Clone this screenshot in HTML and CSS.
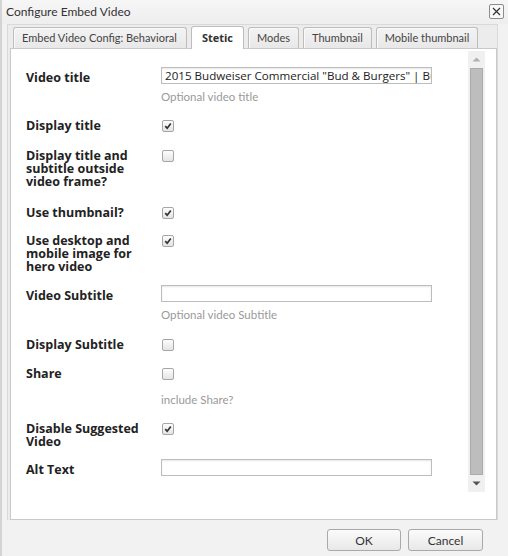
FILE: index.html
```html
<!DOCTYPE html>
<html>
<head>
<meta charset="utf-8">
<link rel="stylesheet" href="styles.css">
</head>
<body>
<div class="dialog">
  <div class="titlebar">
    <span class="title">Configure Embed Video</span>
    <span class="close"><svg width="13" height="13" viewBox="0 0 13 13"><path d="M3 3 L10 10 M10 3 L3 10" stroke="#333" stroke-width="1.2" fill="none"/></svg></span>
  </div>
  <div class="tabpanel">
    <div class="tabstrip">
      <div class="tab tab-wide">Embed Video Config: Behavioral</div>
      <div class="tab active">Stetic</div>
      <div class="tab">Modes</div>
      <div class="tab">Thumbnail</div>
      <div class="tab">Mobile thumbnail</div>
    </div>
    <div class="body">
      <div class="scrollarea">
        <div class="form">
          <div class="row">
            <div class="label label-input">Video title</div>
            <div class="field">
              <div class="input">2015 Budweiser Commercial "Bud &amp; Burgers" | Budweiser</div>
              <div class="help">Optional video title</div>
            </div>
          </div>
          <div class="row sp-16">
            <div class="label">Display title</div>
            <div class="field"><span class="cb checked"><svg width="10" height="10" viewBox="0 0 10 10"><path d="M2.2 5.2 L4.2 7.2 L7.8 2.6" stroke="#333" stroke-width="1.7" fill="none"/></svg></span></div>
          </div>
          <div class="row sp-17">
            <div class="label">Display title and<br>subtitle outside<br>video frame?</div>
            <div class="field"><span class="cb"></span></div>
          </div>
          <div class="row sp-18">
            <div class="label">Use thumbnail?</div>
            <div class="field"><span class="cb checked"><svg width="10" height="10" viewBox="0 0 10 10"><path d="M2.2 5.2 L4.2 7.2 L7.8 2.6" stroke="#333" stroke-width="1.7" fill="none"/></svg></span></div>
          </div>
          <div class="row sp-15">
            <div class="label">Use desktop and<br>mobile image for<br>hero video</div>
            <div class="field"><span class="cb checked"><svg width="10" height="10" viewBox="0 0 10 10"><path d="M2.2 5.2 L4.2 7.2 L7.8 2.6" stroke="#333" stroke-width="1.7" fill="none"/></svg></span></div>
          </div>
          <div class="row sp-12">
            <div class="label label-input">Video Subtitle</div>
            <div class="field">
              <div class="input"></div>
              <div class="help">Optional video Subtitle</div>
            </div>
          </div>
          <div class="row sp-17">
            <div class="label">Display Subtitle</div>
            <div class="field"><span class="cb"></span></div>
          </div>
          <div class="row sp-16">
            <div class="label">Share</div>
            <div class="field">
              <span class="cb"></span>
              <div class="help help-cb">include Share?</div>
            </div>
          </div>
          <div class="row sp-16">
            <div class="label">Disable Suggested<br>Video</div>
            <div class="field"><span class="cb checked"><svg width="10" height="10" viewBox="0 0 10 10"><path d="M2.2 5.2 L4.2 7.2 L7.8 2.6" stroke="#333" stroke-width="1.7" fill="none"/></svg></span></div>
          </div>
          <div class="row sp-11">
            <div class="label label-input">Alt Text</div>
            <div class="field"><div class="input"></div></div>
          </div>
        </div>
        <div class="scrollbar">
          <div class="sb-btn"><svg width="9" height="5" viewBox="0 0 9 5"><path d="M0.5 4.5 L4.5 0.5 L8.5 4.5 Z" fill="#b0b0b0"/></svg></div>
          <div class="sb-track"><div class="sb-thumb"></div></div>
          <div class="sb-btn"><svg width="9" height="5" viewBox="0 0 9 5"><path d="M0.5 0.5 L8.5 0.5 L4.5 4.5 Z" fill="#555"/></svg></div>
        </div>
      </div>
    </div>
  </div>
  <div class="footer">
    <button class="btn btn-ok">OK</button>
    <button class="btn btn-cancel">Cancel</button>
  </div>
</div>
</body>
</html>
```
FILE: styles.css
```css
* { box-sizing: border-box; }
html, body { margin: 0; padding: 0; }
body {
  width: 508px;
  height: 556px;
  overflow: hidden;
  background: #f2f2f2;
  font-family: "Open Sans", "DejaVu Sans", sans-serif;
  color: #333;
}
.dialog {
  width: 508px;
  height: 556px;
  border-left: 2px solid #d4d4d4;
  background: #f2f2f2;
  display: flex;
  flex-direction: column;
}
.titlebar {
  height: 24px;
  display: flex;
  align-items: center;
  justify-content: space-between;
  padding: 0 4px 0 4px;
  background: linear-gradient(#f6f6f6, #eeeeee);
}
.title {
  font-family: "Lato", "Open Sans", sans-serif;
  font-size: 12px;
  color: #333;
  margin-top: -1px;
}
.close {
  width: 15px;
  height: 15px;
  border: 1px solid #8c8c8c;
  border-radius: 2px;
  background: #f8f8f8;
  display: flex;
  align-items: center;
  justify-content: center;
  margin-top: -2px;
}
.tabpanel {
  margin: 0 10px 0 5px;
  border: 1px solid #d9d9d9;
  border-bottom: none;
  background: #ececec;
  padding: 2px 0 0 2px;
}
.tabstrip {
  display: flex;
  gap: 4px;
  padding-left: 3px;
  height: 21px;
  align-items: flex-end;
}
.tab {
  height: 21px;
  padding: 0 8px;
  border: 1px solid #bdbdbd;
  border-bottom: none;
  border-radius: 3px 3px 0 0;
  box-shadow: inset 1px 1px 0 #fafafa;
  background: linear-gradient(#f3f3f3, #e8e8e8);
  font-family: "Lato", "Open Sans", sans-serif;
  font-size: 11px;
  line-height: 20px;
  color: #444;
  white-space: nowrap;
}
.tab.tab-wide { padding: 0 9px 0 8px; }
.tab.active {
  height: 23px;
  margin-bottom: -1px;
  padding: 1px 10px 0;
  background: #fff;
  box-shadow: none;
  font-family: "Open Sans", sans-serif;
  font-size: 11px;
  font-weight: bold;
  color: #333;
  position: relative;
  z-index: 1;
}
.body {
  background: #fff;
  border: 1px solid #c9c9c9;
  height: 472px;
  padding-top: 2px;
}
.scrollarea {
  display: flex;
  height: 441px;
}
.form {
  flex: 1;
  padding: 16px 0 0 15px;
  overflow: hidden;
}
.row {
  display: grid;
  grid-template-columns: 135px 1fr;
  margin-top: 16px;
}
.row:first-child { margin-top: 0; }
.row.sp-18 { margin-top: 18px; }
.row.sp-17 { margin-top: 17px; }
.row.sp-16 { margin-top: 16px; }
.row.sp-15 { margin-top: 15px; }
.row.sp-12 { margin-top: 12px; }
.row.sp-11 { margin-top: 11px; }
.label {
  font-weight: bold;
  font-size: 12.5px;
  line-height: 13px;
  color: #222;
  white-space: nowrap;
}
.label-input { padding-top: 4px; }
.field { display: flex; flex-direction: column; align-items: flex-start; }
.input {
  width: 271px;
  height: 17px;
  border: 1px solid #bdbdbd;
  box-shadow: inset 0 1px 2px #e6e6e6;
  background: #fff;
  font-size: 11.6px;
  line-height: 15px;
  padding-left: 3px;
  color: #222;
  white-space: nowrap;
  overflow: hidden;
}
.help {
  font-family: "Lato", "Open Sans", sans-serif;
  font-size: 11.5px;
  line-height: 13px;
  color: #9a9a9a;
  margin-top: 6px;
}
.help-cb { margin-top: 13px; }
.cb {
  width: 12px;
  height: 12px;
  margin: 1px 0 0 1px;
  border: 1px solid #a6a6a6;
  border-radius: 2px;
  background: linear-gradient(#fdfdfd, #e4e4e4);
  display: flex;
  align-items: center;
  justify-content: center;
}
.scrollbar {
  width: 17px;
  margin-right: 11px;
  background: #f0f0f0;
  display: flex;
  flex-direction: column;
}
.sb-btn {
  height: 17px;
  display: flex;
  align-items: center;
  justify-content: center;
}
.sb-track {
  flex: 1;
  padding: 0 2px;
}
.sb-thumb {
  height: 100%;
  background: #bdbdbd;
  border: 1px solid #ababab;
}
.footer {
  flex: 1;
  display: flex;
  justify-content: flex-end;
  align-items: flex-start;
  gap: 7px;
  padding: 9px 25px 0 0;
}
.btn {
  height: 22px;
  border: 1px solid #a9a9a9;
  border-radius: 3px;
  background: linear-gradient(#fbfbfb, #e8e8e8);
  font-family: "Lato", "Open Sans", sans-serif;
  font-size: 12px;
  color: #333;
  padding: 0;
}
.btn-ok { width: 74px; }
.btn-cancel { width: 75px; }
```
